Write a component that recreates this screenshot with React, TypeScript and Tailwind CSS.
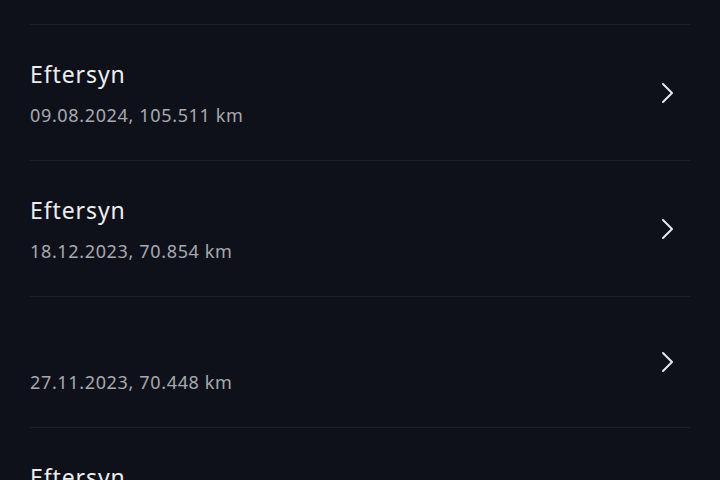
import React from "react";

type Entry = { title?: string; detail: string };

const entries: Entry[] = [
  { title: "Eftersyn", detail: "09.08.2024, 105.511 km" },
  { title: "Eftersyn", detail: "18.12.2023, 70.854 km" },
  { detail: "27.11.2023, 70.448 km" },
  { title: "Eftersyn", detail: "02.05.2023, 52.310 km" },
];

function Chevron() {
  return (
    <svg width="16" height="22" viewBox="0 0 16 22" fill="none" className="shrink-0">
      <polyline
        points="3,2 12,11 3,20"
        stroke="#e6e7ea"
        strokeWidth="2"
        strokeLinecap="round"
        strokeLinejoin="round"
      />
    </svg>
  );
}

function Row({ entry }: { entry: Entry }) {
  return (
    <div
      className={
        entry.title
          ? "flex items-center justify-between border-t border-[#1f212a] pr-[14px] h-[136px]"
          : "flex items-center justify-between border-t border-[#1f212a] pr-[14px] h-[131px]"
      }
    >
      <div className="flex flex-col">
        {entry.title ? (
          <div className="text-[23px] leading-[30px] tracking-[0.9px] text-[#eceef0]">{entry.title}</div>
        ) : (
          <div className="h-[25px]" />
        )}
        <div className="mt-[14px] text-[18px] leading-[24px] tracking-[0.65px] text-[#a7a9af]">
          {entry.detail}
        </div>
      </div>
      <Chevron />
    </div>
  );
}

export default function App() {
  return (
    <div
      className="w-[720px] h-[480px] overflow-hidden bg-[#0f111a]"
      style={{ fontFamily: '"Noto Sans", "Open Sans", sans-serif' }}
    >
      <div className="px-[30px] pt-[24px]">
        {entries.map((e, i) => (
          <Row key={i} entry={e} />
        ))}
      </div>
    </div>
  );
}
